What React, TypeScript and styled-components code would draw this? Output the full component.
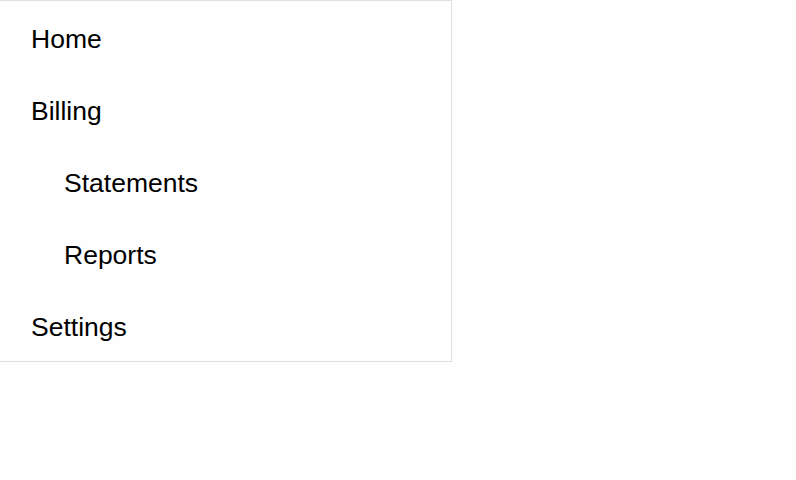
import React from 'react'
import styled, { createGlobalStyle } from 'styled-components'

const GlobalStyle = createGlobalStyle`
  body {
    margin: 0;
    background: #fefefe;
    font-family: 'Liberation Sans', Arial, sans-serif;
  }
`

const Nav = styled.nav`
  width: 451px;
  border: 1px solid #dfdfdf;
  border-left: none;
  background: #fefefe;
`

const List = styled.ul`
  list-style: none;
  margin: 0;
  padding: 0;
`

const Item = styled.li<{ $nested?: boolean }>`
  box-sizing: border-box;
  height: 72px;
  padding-top: 4px;
  line-height: 68px;
  padding-left: ${({ $nested }) => ($nested ? '64px' : '31px')};
  font-size: 26.5px;
  color: #000;
`

const items = [
  { label: 'Home' },
  { label: 'Billing' },
  { label: 'Statements', nested: true },
  { label: 'Reports', nested: true },
  { label: 'Settings' },
]

const App = () => (
  <>
    <GlobalStyle />
    <Nav>
      <List>
        {items.map((item) => (
          <Item key={item.label} $nested={item.nested}>
            {item.label}
          </Item>
        ))}
      </List>
    </Nav>
  </>
)

export default App
